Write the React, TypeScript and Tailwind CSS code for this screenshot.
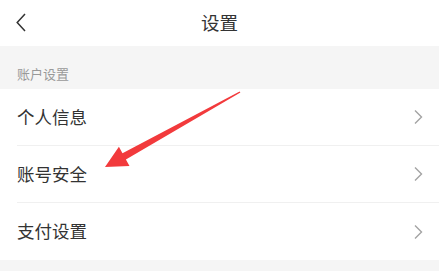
import React from 'react';

const font = { fontFamily: '"Noto Sans CJK SC", "Noto Sans", sans-serif' };

function Chevron() {
  return (
    <svg width="11" height="16" viewBox="0 0 11 16" fill="none">
      <path d="M2 1.5 L8.5 8 L2 14.5" stroke="#a3a3a3" strokeWidth="1.4" />
    </svg>
  );
}

function Row({ label, last }: { label: string; last?: boolean }) {
  return (
    <div className="flex h-[57px] items-center pl-[17px]">
      <div className={`flex h-full flex-1 items-center justify-between pr-[15px] ${last ? '' : 'border-b border-[#f0f0f0]'}`}>
        <span className="text-[17.5px] text-[#333]">{label}</span>
        <Chevron />
      </div>
    </div>
  );
}

export default function App() {
  return (
    <div className="relative h-[271px] w-[439px] overflow-hidden bg-[#f5f5f5]" style={font}>
      <div className="relative flex h-[46px] items-center justify-center bg-white">
        <svg className="absolute left-[16px] top-[13px]" width="10" height="19" viewBox="0 0 10 19" fill="none">
          <path d="M9 1 L1.2 9.5 L9 18" stroke="#333" strokeWidth="1.5" />
        </svg>
        <span className="text-[18.5px] text-[#333]">设置</span>
      </div>
      <div className="h-[43px] pl-[17px] pt-[18px] text-[13px] leading-[19px] text-[#999]">账户设置</div>
      <div className="bg-white">
        <Row label="个人信息" />
        <Row label="账号安全" />
        <Row label="支付设置" last />
      </div>
      <svg className="pointer-events-none absolute left-0 top-0" width="439" height="271" viewBox="0 0 439 271">
        <polygon
          points="105,167 118.9,146.7 122.5,153.2 239.6,91.4 240.4,92.6 125.9,159.4 129.5,165.9"
          fill="#f23a3c"
        />
      </svg>
    </div>
  );
}
